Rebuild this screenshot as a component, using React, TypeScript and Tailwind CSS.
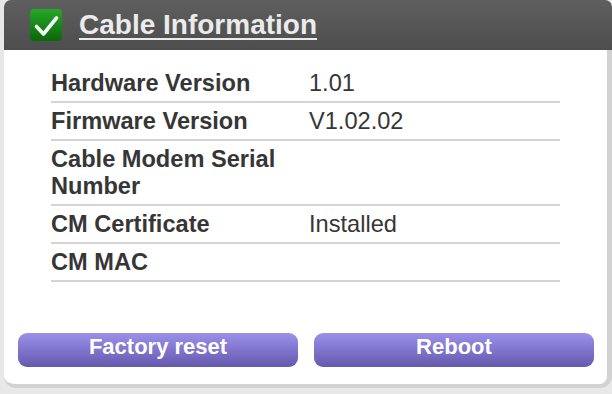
import React from 'react';

interface InfoRow {
  label: string;
  value: string;
}

const rows: InfoRow[] = [
  { label: 'Hardware Version', value: '1.01' },
  { label: 'Firmware Version', value: 'V1.02.02' },
  { label: 'Cable Modem Serial Number', value: '' },
  { label: 'CM Certificate', value: 'Installed' },
  { label: 'CM MAC', value: '' },
];

function CheckBadge() {
  return (
    <div className="w-[32px] h-[32px] rounded-[4px] bg-gradient-to-b from-[#27a827] to-[#0a670a] flex items-center justify-center">
      <svg width="26" height="26" viewBox="0 0 26 26">
        <path
          d="M3.5 14.5 L10.5 22 L23.5 6"
          fill="none"
          stroke="#ffffff"
          strokeWidth="3.6"
          strokeLinecap="round"
          strokeLinejoin="round"
          opacity="0.95"
        />
      </svg>
    </div>
  );
}

function PillButton({ label }: { label: string }) {
  return (
    <button className="w-[280px] h-[34px] rounded-[9px] bg-gradient-to-b from-[#9c91ea] to-[#6459ad] text-white font-bold text-[22px] leading-[26px] pb-[6px] flex items-start justify-center pt-[1px]">
      {label}
    </button>
  );
}

export default function App() {
  return (
    <div
      className="w-[612px] h-[394px] bg-[#e8e8e8] pl-[4px] overflow-hidden"
      style={{ fontFamily: '"Liberation Sans", Arial, sans-serif' }}
    >
      <div className="flex flex-col h-[388px]">
        {/* header */}
        <div className="h-[50px] rounded-t-[7px] bg-gradient-to-b from-[#5f5f5f] to-[#4d4d4d] flex items-center pl-[26px] gap-[17px]">
          <CheckBadge />
          <span className="text-[#ebebeb] font-bold text-[28px] leading-[32px] underline decoration-2 underline-offset-[4px]">
            Cable Information
          </span>
        </div>

        {/* body */}
        <div className="flex-1 flex flex-col bg-white border-r-[5px] border-b-[4px] border-[#d2d2d2] rounded-b-[12px]">
          <div className="ml-[47px] w-[509px] mt-[15px]">
            {rows.map((row) => (
              <div
                key={row.label}
                className="flex border-b-2 border-[#d4d4d4] pt-[5px] pb-[4px] text-[#363636] text-[23.6px] leading-[27px]"
              >
                <div className="w-[258px] pr-[20px] font-bold">{row.label}</div>
                <div className="flex-1">{row.value}</div>
              </div>
            ))}
          </div>

          <div className="mt-auto flex gap-[16px] pl-[14px] pb-[17px]">
            <PillButton label="Factory reset" />
            <PillButton label="Reboot" />
          </div>
        </div>
      </div>
    </div>
  );
}
